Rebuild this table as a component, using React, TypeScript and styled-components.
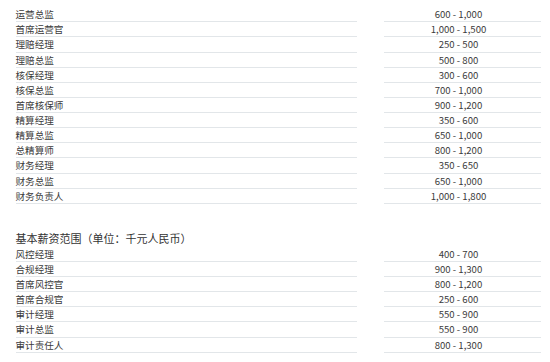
import styled, { createGlobalStyle } from "styled-components";

const GlobalStyle = createGlobalStyle`
	body {
		margin: 0;
		background: #ffffff;
		font-family: "Noto Sans CJK SC", "Noto Sans", sans-serif;
		color: #3b3b3b;
	}
`;

const sections = [
	{
		title: "",
		rows: [
			["运营总监", "600 - 1,000"],
			["首席运营官", "1,000 - 1,500"],
			["理赔经理", "250 - 500"],
			["理赔总监", "500 - 800"],
			["核保经理", "300 - 600"],
			["核保总监", "700 - 1,000"],
			["首席核保师", "900 - 1,200"],
			["精算经理", "350 - 600"],
			["精算总监", "650 - 1,000"],
			["总精算师", "800 - 1,200"],
			["财务经理", "350 - 650"],
			["财务总监", "650 - 1,000"],
			["财务负责人", "1,000 - 1,800"],
		],
	},
	{
		title: "基本薪资范围（单位：千元人民币）",
		rows: [
			["风控经理", "400 - 700"],
			["合规经理", "900 - 1,300"],
			["首席风控官", "800 - 1,200"],
			["首席合规官", "250 - 600"],
			["审计经理", "550 - 900"],
			["审计总监", "550 - 900"],
			["审计责任人", "800 - 1,300"],
		],
	},
];

const Page = styled.div`
	padding: 7.2px 9px 0 15.5px;
`;

const Section = styled.section`
	& + & {
		margin-top: 27px;
	}
`;

const Heading = styled.h3`
	margin: 0 0 1px;
	font-size: 11px;
	font-weight: 400;
	line-height: 15px;
	color: #333333;
`;

const Row = styled.div`
	display: grid;
	grid-template-columns: 341px 157px;
	column-gap: 27px;
`;

const Cell = styled.div<{ $align?: "left" | "center" }>`
	height: 14.14px;
	line-height: 14.14px;
	font-size: 9.6px;
	white-space: nowrap;
	text-align: ${ ({ $align }) => $align || "left" };
	padding-right: ${ ({ $align }) => ($align === "center" ? "7px" : "0") };
	border-bottom: 1px solid #e2e6e9;
`;

export default function App() {
	return(
		<Page>
			<GlobalStyle />
			{ sections.map((section, i) => (
				<Section key={ i }>
					{ section.title && <Heading>{ section.title }</Heading> }
					{ section.rows.map(([role, range]) => (
						<Row key={ role }>
							<Cell>{ role }</Cell>
							<Cell $align="center">{ range }</Cell>
						</Row>
					)) }
				</Section>
			)) }
		</Page>
	);
}
